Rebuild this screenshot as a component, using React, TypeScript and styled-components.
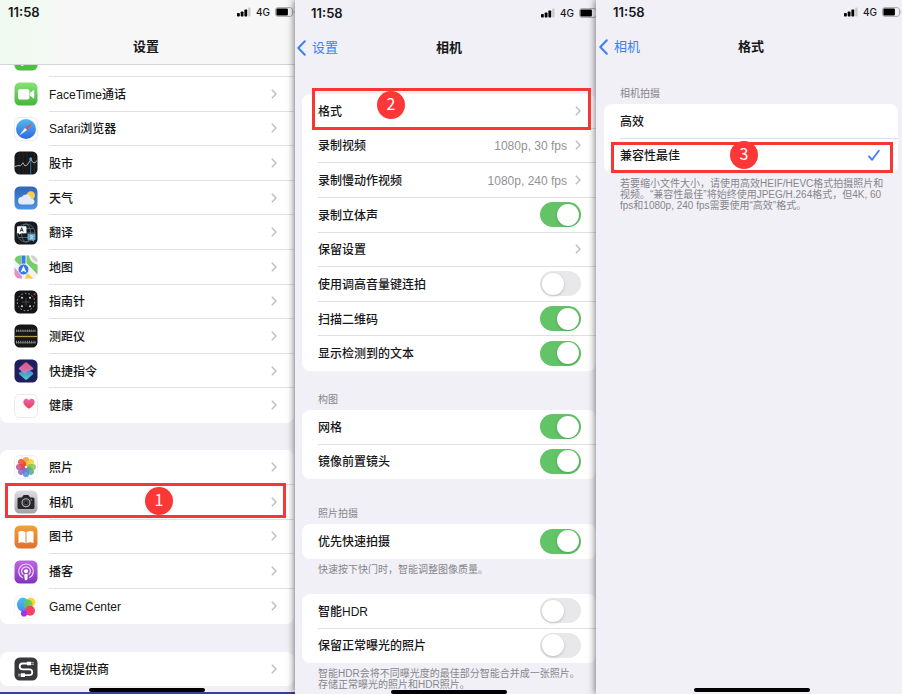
import React from "react";
import styled, { createGlobalStyle, css } from "styled-components";

const GlobalStyle = createGlobalStyle`
  *, *::before, *::after { box-sizing: border-box; }
  body {
    margin: 0;
    background: #f1f0f6;
    color: #161618;
    font-family: "Liberation Sans", "Noto Sans CJK SC", sans-serif;
    font-size: 12px;
    line-height: 16px;
  }
`;

const Screens = styled.main`
  display: grid;
  grid-template-columns: 295fr 301fr 306fr;
  min-height: 100vh;
`;

const Phone = styled.section<{ $dropped?: boolean; $wallpaper?: boolean }>`
  position: relative;
  display: flex;
  flex-direction: column;
  min-width: 0;
  padding-top: ${(p) => (p.$dropped ? 1 : 0)}px;
  background: #f1f0f6;
  border-bottom: ${(p) => (p.$wallpaper ? "2px solid #35409a" : "none")};
  & + & {
    box-shadow: -1px 0 7px rgba(0, 0, 0, 0.5);
  }
`;

const TopArea = styled.header<{ $translucent?: boolean }>`
  display: flex;
  flex-direction: column;
  gap: 6px;
  height: 65px;
  ${(p) =>
    p.$translucent &&
    css`
      background: linear-gradient(90deg, #f0faf0 0, #f0faf0 24px, #f7f7f7 64px);
      border-bottom: 1px solid #d4d4d6;
    `}
`;

const StatusBar = styled.div<{ $left: number }>`
  display: flex;
  align-items: center;
  justify-content: space-between;
  height: 24px;
  padding-left: ${(p) => p.$left}px;
`;

const Clock = styled.time`
  font-family: Inter, sans-serif;
  font-size: 13px;
  font-weight: 600;
`;

const StatusIcons = styled.div<{ $right: number }>`
  display: flex;
  align-items: center;
  gap: 5px;
  margin-right: ${(p) => p.$right}px;
`;

const Network = styled.span`
  font-family: Inter, sans-serif;
  font-size: 10px;
  font-weight: 500;
  line-height: 12px;
`;

const NavBar = styled.div<{ $left?: number; $right?: number }>`
  display: grid;
  grid-template-columns: 1fr auto 1fr;
  align-items: center;
  height: 34px;
  padding: 0 ${(p) => p.$right ?? 0}px 0 ${(p) => p.$left ?? 0}px;
`;

const NavSide = styled.div<{ $pull: number }>`
  display: flex;
  margin-left: ${(p) => -p.$pull}px;
`;

const BackLink = styled.a`
  display: flex;
  align-items: center;
  gap: 6px;
  padding-left: 3px;
  color: #3b80f2;
  font-size: 13px;
  text-decoration: none;
`;

const Title = styled.h1`
  grid-column: 2;
  margin: 0;
  font-size: 13px;
  font-weight: 700;
  line-height: 20px;
`;

const Content = styled.div<{ $left: number; $right: number }>`
  padding: 0 ${(p) => p.$right}px 0 ${(p) => p.$left}px;
`;

const Group = styled.div<{ $height: number; $gap?: number; $openTop?: boolean }>`
  display: grid;
  grid-auto-rows: 1fr;
  min-height: ${(p) => p.$height}px;
  margin-top: ${(p) => p.$gap ?? 0}px;
  background: #fff;
  border-radius: ${(p) => (p.$openTop ? "0 0 8px 8px" : "8px")};
`;

const ClippedRow = styled.div`
  display: flex;
  align-items: flex-end;
  gap: 11px;
  height: 12px;
  padding-left: 14px;
  overflow: hidden;
  background: #fff;
`;

const ClippedIcon = styled.span`
  display: flex;
  align-items: flex-end;
  height: 12px;
  padding-bottom: 6px;
`;

const ClippedLine = styled.span`
  flex: 1;
  border-bottom: 1px solid #e0e0e3;
`;

const rowLayout = css<{ $icon?: boolean }>`
  position: relative;
  display: flex;
  align-items: center;
  gap: 11px;
  padding-left: ${(p) => (p.$icon ? 14 : 16)}px;
  color: inherit;
  text-decoration: none;
`;

const LinkRow = styled.a<{ $icon?: boolean }>`
  ${rowLayout}
`;

const ControlRow = styled.label<{ $icon?: boolean }>`
  ${rowLayout}
`;

const RowBody = styled.span<{ $right: number }>`
  flex: 1;
  align-self: stretch;
  display: flex;
  align-items: center;
  gap: 8px;
  padding-right: ${(p) => p.$right}px;
  border-bottom: 1px solid #e0e0e3;
  *:last-child > & {
    border-bottom-color: transparent;
  }
`;

const RowLabel = styled.span`
  flex: 1;
  padding-top: 2px;
  font-weight: 500;
  white-space: nowrap;
`;

const RowValue = styled.span`
  padding-top: 2px;
  color: #929296;
  white-space: nowrap;
`;

const SectionLabel = styled.h2<{ $gap: number }>`
  margin: ${(p) => p.$gap}px 0 5px;
  padding-left: 16px;
  color: #86868b;
  font-size: 10px;
  font-weight: 400;
  line-height: 11px;
`;

const Note = styled.p`
  margin: 5px 0 0;
  padding-left: 16px;
  color: #86868b;
  font-size: 10px;
  line-height: 11px;
  white-space: nowrap;
`;

const Switch = styled.input`
  appearance: none;
  display: flex;
  align-items: center;
  width: 41px;
  height: 25px;
  margin: 0;
  padding: 0 2px;
  border-radius: 13px;
  background: #e8e8ea;
  &::before {
    content: "";
    width: 22px;
    height: 22px;
    border-radius: 50%;
    background: #fff;
    box-shadow: 0 1px 3px rgba(0, 0, 0, 0.2);
  }
  &:checked {
    justify-content: flex-end;
    background: #62c466;
  }
`;

const HiddenRadio = styled.input`
  position: absolute;
  opacity: 0;
  margin: 0;
`;

const HomeBar = styled.div<{ $left: number; $bottom: number }>`
  position: absolute;
  left: ${(p) => p.$left}%;
  bottom: ${(p) => p.$bottom}px;
  width: 116px;
  height: 4px;
  border-radius: 2px;
  background: #000;
`;

const Highlight = styled.span<{ $inset: string }>`
  position: absolute;
  inset: ${(p) => p.$inset};
  z-index: 1;
  border: 3px solid #f83633;
`;

const StepBadge = styled.span<{ $left: number; $top: number }>`
  position: absolute;
  left: ${(p) => p.$left}px;
  top: ${(p) => p.$top}px;
  z-index: 2;
  width: 28px;
  height: 28px;
  border-radius: 50%;
  background: #fb3737;
  color: #fff;
  font-family: "Noto Sans CJK SC", sans-serif;
  font-size: 16px;
  line-height: 24px;
  text-align: center;
`;

const Icon = styled.svg`
  display: block;
  flex: none;
`;

/* ---------- glyphs ---------- */

const Chevron = () => (
  <Icon width="6" height="10" viewBox="0 0 6 10" fill="none" stroke="#bdbdc1" strokeWidth="1.4" aria-hidden>
    <path d="M.8.8 5 5 .8 9.2" />
  </Icon>
);

const BackChevron = () => (
  <Icon width="9" height="16" viewBox="0 0 9 16" fill="none" stroke="#3b80f2" strokeWidth="2" strokeLinecap="round" strokeLinejoin="round" aria-hidden>
    <path d="M7.8 1.3 1.3 8l6.5 6.7" />
  </Icon>
);

const Check = () => (
  <Icon width="12" height="12" viewBox="0 0 12 12" fill="none" stroke="#3b80f2" strokeWidth="1.8" strokeLinecap="round" strokeLinejoin="round" aria-hidden>
    <path d="m1 7.3 3.1 3.500L10.800 1.800" />
  </Icon>
);

const Signal = () => (
  <Icon width="14" height="10" viewBox="0 0 14 10" aria-hidden>
    <rect x="0" y="6" width="2.8" height="3.5" rx=".7" />
    <rect x="3.7" y="4.5" width="2.8" height="5" rx=".7" />
    <rect x="7.4" y="2.5" width="2.8" height="7" rx=".7" />
    <rect x="11.2" y=".5" width="2.3" height="9" rx=".7" fill="#c9c9cc" />
  </Icon>
);

const Battery = () => (
  <Icon width="20" height="10" viewBox="0 0 20 10" aria-hidden>
    <rect x=".5" y=".6" width="17" height="8.8" rx="2.4" fill="none" stroke="#a9a9ad" />
    <rect x="1.4" y="1.5" width="11.500" height="7" rx="1" />
    <path d="M18.6 3.4c1.2.4 1.2 2.8 0 3.2z" fill="#a9a9ad" />
  </Icon>
);

type AppName =
  | "messages" | "facetime" | "safari" | "stocks" | "weather" | "translate" | "maps" | "compass"
  | "measure" | "shortcuts" | "health" | "photos" | "camera" | "books" | "podcasts" | "gamecenter" | "tv";

const Tile = ({ fill, stroke }: { fill: string; stroke?: string }) => (
  <rect x=".5" y=".5" width="23" height="23" rx="5.2" fill={fill} stroke={stroke} strokeWidth=".6" />
);

const art: Record<AppName, React.ReactNode> = {
  messages: (
    <>
      <Tile fill="#4fbd42" />
      <path d="M6.5 19.2c1.6 0 3-.5 3.6-1.4l-2.2-1.3c0 1.200-.5 2-1.4 2.700z" fill="#fff" />
    </>
  ),
  facetime: (
    <>
      <Tile fill="url(#gFace)" />
      <rect x="4" y="7" width="11.500" height="10.500" rx="2.600" fill="#fff" />
      <path d="m16.200 10.700 3.100-2.500c.4-.3.900-.1.900.5v7.100c0 .6-.5.8-.9.500l-3.100-2.500z" fill="#fff" />
    </>
  ),
  safari: (
    <>
      <Tile fill="#fcfcfd" stroke="#e3e3e6" />
      <circle cx="12" cy="12" r="10" fill="url(#gSafari)" />
      <path d="m18.800 5.600-5.700 7.500-2.200-2.200z" fill="#e8503d" />
      <path d="m5.200 18.400 5.700-7.500 2.200 2.200z" fill="#f4f6f8" />
    </>
  ),
  stocks: (
    <>
      <Tile fill="#17181a" />
      <path d="M5 1v22M9 1v22M13 1v22M20.500 1v22" stroke="#303134" strokeWidth=".6" />
      <path d="M16.700 6v17" stroke="#2d78a8" strokeWidth="1" />
      <path d="m1 15.500 3-1 2.500.3 2.500-3 2 3.200 2.200-1 2-3 1.700-2.500 2.200 3 2 .3 1.900-2.500" fill="none" stroke="#bcbcbe" strokeWidth=".9" />
      <circle cx="16.700" cy="8" r="1.500" fill="#43a8e0" />
    </>
  ),
  weather: (
    <>
      <Tile fill="url(#gWeather)" />
      <circle cx="16.800" cy="9.500" r="4.200" fill="#f7ce53" />
      <path d="M8 18.500a3.700 3.700 0 0 1-.3-7.400 5 5 0 0 1 9.300 1.600c2.200 0 3.500 1.200 3.500 2.900 0 1.800-1.300 2.900-3.200 2.900z" fill="#e3edf9" />
    </>
  ),
  translate: (
    <>
      <Tile fill="#17191c" />
      <g fill="none" stroke="#5e7481" strokeWidth=".8">
        <circle cx="12" cy="12" r="9" />
        <ellipse cx="12" cy="12" rx="4.500" ry="9" />
        <path d="M3 12h18M4.500 7.500h15M4.500 16.500h15" />
      </g>
      <path d="M4 5.200h7.500c.6 0 1 .4 1 1v5c0 .6-.4 1-1 1H7l-2 1.600v-1.600H4c-.6 0-1-.4-1-1v-5c0-.6.400-1 1-1z" fill="#fff" />
      <path d="m6.200 10.700 1.500-4 1.500 4M6.700 9.400h2" fill="none" stroke="#222" strokeWidth=".9" />
      <path d="M14.500 12.700h6c.6 0 1 .4 1 1v4.600c0 .6-.4 1-1 1h-.5v1.700l-2.200-1.700h-3.300c-.6 0-1-.4-1-1v-4.600c0-.6.400-1 1-1z" fill="#5da7c6" />
      <path d="M15.800 15h3.600M17.600 14v1M16 18c1.600-.5 2.600-1.500 2.900-3M16.400 15.500c.5 1.300 1.400 2.100 2.700 2.500" fill="none" stroke="#d5eef8" strokeWidth=".7" />
    </>
  ),
  maps: (
    <>
      <clipPath id="cMaps"><rect x=".5" y=".5" width="23" height="23" rx="5.200" /></clipPath>
      <g clipPath="url(#cMaps)">
        <path d="M0 0h24v24H0z" fill="#f4f2ee" />
        <path d="M0 0h7v11L0 5z" fill="#74ce65" />
        <path d="M12.500 0H15c0 5 4 9 9 9.500V20L12.500 8z" fill="#74ce65" />
        <path d="M17 0c.5 4 3 6.500 7 7V0z" fill="#cfd0d2" />
        <path d="M20 0c.3 2 1.500 3.500 4 4V0z" fill="#eeeeef" />
        <path d="M0 12l8 9v3H0z" fill="#e58fc9" />
        <path d="m13 18 7 6h-9z" fill="#f8c843" />
        <path d="M7.500 0h4v12h-4z" fill="#3a7cf0" />
        <circle cx="9.500" cy="14.500" r="5.500" fill="#3478f0" stroke="#fff" strokeWidth=".9" />
        <path d="m9.500 10.800 3 6.700-3-1.400-3 1.400z" fill="#fff" />
      </g>
    </>
  ),
  compass: (
    <>
      <Tile fill="#141416" />
      <circle cx="12" cy="12" r="8.700" fill="none" stroke="#aaaaad" strokeWidth="1" strokeDasharray="1.500 2.100" />
      <path d="M12 8v8M8 12h8" stroke="#67676b" strokeWidth=".6" />
      <g fill="#dcdcde">
        <circle cx="8" cy="7.700" r="1" /><circle cx="16" cy="7.700" r="1" />
        <circle cx="8" cy="16.300" r="1" /><circle cx="16" cy="16.300" r="1" />
      </g>
      <path d="m19 4.300 2.200-1.500.2 2.600z" fill="#f1372f" />
    </>
  ),
  measure: (
    <>
      <Tile fill="#151517" />
      <path d="M2 6.800h20" stroke="#a8a8aa" strokeWidth="2.600" strokeDasharray=".7 1.500" />
      <path d="M3 7h19" stroke="#77777a" strokeWidth="1" />
      <path d="M1 12.500h22" stroke="#c8a63a" strokeWidth="1.200" />
      <path d="M3 12.500h18" stroke="#7a6626" strokeWidth="1.800" strokeDasharray=".6 2" />
      <path d="M2 18.200h20" stroke="#bdbdbf" strokeWidth="2.800" strokeDasharray=".7 1.500" />
      <path d="M3 18.700h19" stroke="#77777a" strokeWidth="1" />
    </>
  ),
  shortcuts: (
    <>
      <Tile fill="#1d1f5f" />
      <path d="m11.500 9.500 1.400-.7 5.800 4.700c.9.700.9 1.400 0 2.100l-5.400 4.700c-.8.700-1.600.7-2.400 0l-5.400-4.700c-.9-.7-.9-1.400 0-2.100z" fill="url(#gShortB)" />
      <path d="M13.200 3.700c-.8-.7-1.600-.7-2.400 0L5.500 8.400c-.9.700-.9 1.500 0 2.200l6.100 5 1.500-3.100 5.500-1.900c.9-.7.9-1.500 0-2.200z" fill="url(#gShortA)" />
    </>
  ),
  health: (
    <>
      <Tile fill="#fff" stroke="#dcdce0" />
      <path d="M15 14.800c-3.300-2.200-5.700-4.100-5.700-6.800 0-1.900 1.300-3.200 3-3.200 1.200 0 2.200.6 2.700 1.500.5-.9 1.500-1.500 2.700-1.500 1.700 0 3 1.300 3 3.200 0 2.700-2.400 4.600-5.700 6.800z" fill="url(#gHeart)" />
    </>
  ),
  photos: (
    <>
      <Tile fill="#fff" stroke="#e6e6e9" />
      {["#f49b2b", "#e9d333", "#8fc24a", "#55ab84", "#4b8fdc", "#8668c5", "#c44d83", "#e8473a"].map((color, i) => (
        <rect key={color} x="8.900" y="2" width="6.200" height="9" rx="3.100" fill={color} fillOpacity=".85" transform={`rotate(${i * 45} 12 12)`} />
      ))}
    </>
  ),
  camera: (
    <>
      <Tile fill="url(#gCamera)" />
      <path d="M5.300 7.500h2.600l1.300-1.900c.2-.3.500-.5.900-.5h3.800c.4 0 .7.200.9.500l1.300 1.900h2.600c1.100 0 1.800.7 1.800 1.800v7.900c0 1.100-.7 1.800-1.800 1.800H5.300c-1.100 0-1.800-.7-1.800-1.800V9.300c0-1.100.7-1.800 1.800-1.800z" fill="#27282a" />
      <circle cx="12" cy="12.800" r="4" fill="#303235" stroke="#b5b6ba" strokeWidth="1.100" />
      <circle cx="12" cy="12.800" r="2" fill="#18191b" stroke="#77797d" strokeWidth=".5" />
      <circle cx="17.300" cy="9.900" r=".7" fill="#e5ad32" />
    </>
  ),
  books: (
    <>
      <Tile fill="url(#gBooks)" />
      <path d="M11.500 7.200C9.600 5.700 6.800 5.700 4.500 6.800v11.100c2.300-.9 5.100-.9 7 .4zM12.500 7.200c1.900-1.500 4.700-1.500 7-.4v11.100c-2.300-.9-5.100-.9-7 .4z" fill="#fff" />
    </>
  ),
  podcasts: (
    <>
      <Tile fill="url(#gPod)" />
      <g fill="none" stroke="#f2dcff" strokeWidth="1.200" strokeLinecap="round">
        <path d="M8.300 17.600a7.300 7.300 0 1 1 7.400 0" />
        <path d="M9 14.400a4.400 4.400 0 1 1 6 0" />
      </g>
      <circle cx="12" cy="11.200" r="2" fill="#fff" />
      <path d="M10.200 14.800c.3-1.200 3.300-1.200 3.600 0l-.5 4.800c-.2 1-2.400 1-2.600 0z" fill="#fff" />
    </>
  ),
  gamecenter: (
    <>
      <Tile fill="#fff" stroke="#f0f0f2" />
      <circle cx="16.800" cy="7.300" r="4.700" fill="#f7da35" />
      <ellipse cx="9" cy="9.600" rx="6" ry="7" fill="url(#gGame)" />
      <ellipse cx="14" cy="9.500" rx="4.500" ry="5" fill="#67c653" opacity=".85" />
      <circle cx="16" cy="15.700" r="5" fill="#f34269" />
      <circle cx="10" cy="18.400" r="3.100" fill="#9b35ee" />
    </>
  ),
  tv: (
    <>
      <Tile fill="#38383a" />
      <path d="M13 6.500H8.600a2.900 2.900 0 0 0 0 5.800h6.800a2.900 2.900 0 0 1 0 5.800H10" fill="none" stroke="#fff" strokeWidth="1.800" />
      <path d="M13 4.700h4v3.600h-4zM7 16.300h4v3.600H7z" fill="#fff" />
      <path d="M17 5.700h3M17 7.300h3M4 17.300h3M4 18.900h3" stroke="#d0d0d2" strokeWidth=".8" />
    </>
  ),
};

const AppIcon = ({ name }: { name: AppName }) => (
  <Icon width="24" height="24" viewBox="0 0 24 24" aria-hidden>
    {art[name]}
  </Icon>
);

const Gradient = ({ id, from, to }: { id: string; from: string; to: string }) => (
  <linearGradient id={id} x1="0" y1="0" x2="0" y2="1">
    <stop offset="0" stopColor={from} />
    <stop offset="1" stopColor={to} />
  </linearGradient>
);

const GradientSheet = styled.svg`
  position: absolute;
`;

const Gradients = () => (
  <GradientSheet width="0" height="0" aria-hidden>
    <defs>
      <Gradient id="gFace" from="#84e374" to="#46b53f" />
      <Gradient id="gSafari" from="#51b9f1" to="#2f68df" />
      <Gradient id="gWeather" from="#2f66b8" to="#4f93e0" />
      <Gradient id="gShortA" from="#ee4e73" to="#b68ad0" />
      <Gradient id="gShortB" from="#3b6fd8" to="#4fd6c4" />
      <Gradient id="gHeart" from="#e864b4" to="#ef3f4d" />
      <Gradient id="gCamera" from="#dcdce1" to="#a2a2a7" />
      <Gradient id="gBooks" from="#f2a03e" to="#e2702c" />
      <Gradient id="gPod" from="#bd67e2" to="#8235bd" />
      <Gradient id="gGame" from="#45c3f3" to="#4a86f4" />
    </defs>
  </GradientSheet>
);

/* ---------- shared parts ---------- */

const Status = ({ left, right }: { left: number; right: number }) => (
  <StatusBar $left={left}>
    <Clock>11:58</Clock>
    <StatusIcons $right={right}>
      <Signal />
      <Network>4G</Network>
      <Battery />
    </StatusIcons>
  </StatusBar>
);

const Back = ({ label, pull }: { label: string; pull: number }) => (
  <NavSide $pull={pull}>
    <BackLink href="#back">
      <BackChevron />
      {label}
    </BackLink>
  </NavSide>
);

type Step = { n: number; inset: string; left: number; top: number };

const StepMark = ({ step }: { step: Step }) => (
  <>
    <Highlight $inset={step.inset} />
    <StepBadge $left={step.left} $top={step.top}>{step.n}</StepBadge>
  </>
);

const NavRow = ({ label, icon, value, step }: { label: string; icon?: AppName; value?: string; step?: Step }) => (
  <LinkRow href="#open" $icon={!!icon}>
    {icon && <AppIcon name={icon} />}
    <RowBody $right={icon ? 17 : 15}>
      <RowLabel>{label}</RowLabel>
      {value && <RowValue>{value}</RowValue>}
      <Chevron />
    </RowBody>
    {step && <StepMark step={step} />}
  </LinkRow>
);

const SwitchRow = ({ label, on }: { label: string; on?: boolean }) => (
  <ControlRow>
    <RowBody $right={15}>
      <RowLabel>{label}</RowLabel>
      <Switch type="checkbox" role="switch" defaultChecked={on} />
    </RowBody>
  </ControlRow>
);

const OptionRow = ({ label, checked, onPick, step }: { label: string; checked: boolean; onPick: () => void; step?: Step }) => (
  <ControlRow>
    <RowBody $right={18}>
      <HiddenRadio type="radio" name="format" checked={checked} onChange={onPick} />
      <RowLabel>{label}</RowLabel>
      {checked && <Check />}
    </RowBody>
    {step && <StepMark step={step} />}
  </ControlRow>
);

/* ---------- screens ---------- */

const apps: [string, AppName][] = [
  ["FaceTime通话", "facetime"],
  ["Safari浏览器", "safari"],
  ["股市", "stocks"],
  ["天气", "weather"],
  ["翻译", "translate"],
  ["地图", "maps"],
  ["指南针", "compass"],
  ["测距仪", "measure"],
  ["快捷指令", "shortcuts"],
  ["健康", "health"],
];

const SettingsScreen = () => (
  <Phone $wallpaper>
    <TopArea $translucent>
      <Status left={8} right={0} />
      <NavBar $right={3}>
        <Title>设置</Title>
      </NavBar>
    </TopArea>
    <Content $left={0} $right={1}>
      <ClippedRow>
        <ClippedIcon><AppIcon name="messages" /></ClippedIcon>
        <ClippedLine />
      </ClippedRow>
      <Group $height={346} $openTop>
        {apps.map(([label, icon]) => <NavRow key={icon} label={label} icon={icon} />)}
      </Group>
      <Group $height={174} $gap={27}>
        <NavRow label="照片" icon="photos" />
        <NavRow label="相机" icon="camera" step={{ n: 1, inset: "-2px 8px 2px 5px", left: 145, top: 2 }} />
        <NavRow label="图书" icon="books" />
        <NavRow label="播客" icon="podcasts" />
        <NavRow label="Game Center" icon="gamecenter" />
      </Group>
      <Group $height={34} $gap={28}>
        <NavRow label="电视提供商" icon="tv" />
      </Group>
    </Content>
    <HomeBar $left={30} $bottom={0} />
  </Phone>
);

const CameraScreen = () => (
  <Phone $dropped>
    <TopArea>
      <Status left={16} right={-3} />
      <NavBar $left={7}>
        <Back label="设置" pull={8} />
        <Title>相机</Title>
      </NavBar>
    </TopArea>
    <Content $left={7} $right={0}>
      <Group $height={277} $gap={28}>
        <NavRow label="格式" step={{ n: 2, inset: "-6px 5px -1px 10px", left: 75, top: -3 }} />
        <NavRow label="录制视频" value="1080p, 30 fps" />
        <NavRow label="录制慢动作视频" value="1080p, 240 fps" />
        <SwitchRow label="录制立体声" on />
        <NavRow label="保留设置" />
        <SwitchRow label="使用调高音量键连拍" />
        <SwitchRow label="扫描二维码" on />
        <SwitchRow label="显示检测到的文本" on />
      </Group>
      <SectionLabel $gap={23}>构图</SectionLabel>
      <Group $height={69}>
        <SwitchRow label="网格" on />
        <SwitchRow label="镜像前置镜头" on />
      </Group>
      <SectionLabel $gap={29}>照片拍摄</SectionLabel>
      <Group $height={35}>
        <SwitchRow label="优先快速拍摄" on />
      </Group>
      <Note>快速按下快门时，智能调整图像质量。</Note>
      <Group $height={69} $gap={19}>
        <SwitchRow label="智能HDR" />
        <SwitchRow label="保留正常曝光的照片" />
      </Group>
      <Note>
        智能HDR会将不同曝光度的最佳部分智能合并成一张照片。
        <br />
        存储正常曝光的照片和HDR照片。
      </Note>
    </Content>
    <HomeBar $left={32} $bottom={0} />
  </Phone>
);

const FormatScreen = () => {
  const [format, setFormat] = React.useState("compatible");
  return (
    <Phone>
      <TopArea>
        <Status left={17} right={0} />
        <NavBar $left={4}>
          <Back label="相机" pull={4} />
          <Title>格式</Title>
        </NavBar>
      </TopArea>
      <Content $left={8} $right={4}>
        <SectionLabel $gap={23}>相机拍摄</SectionLabel>
        <Group $height={69}>
          <OptionRow label="高效" checked={format === "efficient"} onPick={() => setFormat("efficient")} />
          <OptionRow
            label="兼容性最佳"
            checked={format === "compatible"}
            onPick={() => setFormat("compatible")}
            step={{ n: 3, inset: "3px 5px 0 7px", left: 126, top: 2 }}
          />
        </Group>
        <Note>
          若要缩小文件大小，请使用高效HEIF/HEVC格式拍摄照片和
          <br />
          视频。“兼容性最佳”将始终使用JPEG/H.264格式，但4K, 60
          <br />
          fps和1080p, 240 fps需要使用“高效”格式。
        </Note>
      </Content>
      <HomeBar $left={32} $bottom={2} />
    </Phone>
  );
};

export default function App() {
  return (
    <>
      <GlobalStyle />
      <Gradients />
      <Screens>
        <SettingsScreen />
        <CameraScreen />
        <FormatScreen />
      </Screens>
    </>
  );
}
